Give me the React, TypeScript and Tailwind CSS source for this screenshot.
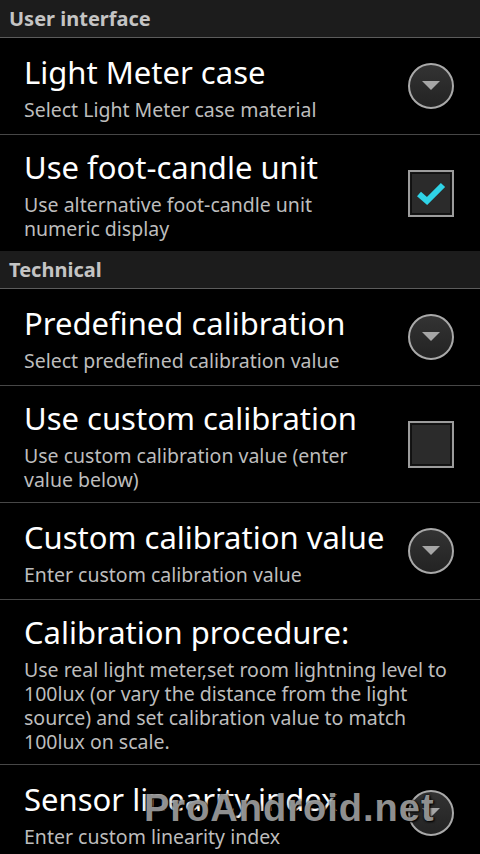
type Pref = {
  title: string;
  summary: string;
  widget?: "list" | "checked" | "unchecked";
};

const userInterface: Pref[] = [
  { title: "Light Meter case", summary: "Select Light Meter case material", widget: "list" },
  {
    title: "Use foot-candle unit",
    summary: "Use alternative foot-candle unit numeric display",
    widget: "checked",
  },
];

const technical: Pref[] = [
  { title: "Predefined calibration", summary: "Select predefined calibration value", widget: "list" },
  {
    title: "Use custom calibration",
    summary: "Use custom calibration value (enter value below)",
    widget: "unchecked",
  },
  { title: "Custom calibration value", summary: "Enter custom calibration value", widget: "list" },
  {
    title: "Calibration procedure:",
    summary:
      "Use real light meter,set room lightning level to 100lux (or vary the distance from the light source) and set calibration value to match 100lux on scale.",
  },
  { title: "Sensor linearity index", summary: "Enter custom linearity index", widget: "list" },
];

const ListIcon = () => (
  <div className="flex h-[46px] w-[46px] items-center justify-center rounded-full border-2 border-[#a9a9a9] bg-gradient-to-b from-[#333] to-[#232323]">
    <svg width="18" height="10" viewBox="0 0 18 10">
      <path d="M0 0 H18 L9 9 Z" fill="#a6a6a6" />
    </svg>
  </div>
);

const CheckBox = ({ checked }: { checked: boolean }) => (
  <div className="flex h-[47px] w-[46px] items-center justify-center border-2 border-[#9c9c9c] bg-[#151515]">
    <div className="flex h-[41px] w-[40px] items-center justify-center border border-[#111] bg-[#2b2b2b]">
      {checked && (
        <svg width="30" height="26" viewBox="0 0 30 26">
          <path
            d="M3 14 L11 21 L27 5"
            fill="none"
            stroke="#2fd3e6"
            strokeWidth="6"
            strokeLinejoin="miter"
          />
        </svg>
      )}
    </div>
  </div>
);

const Header = ({ label }: { label: string }) => (
  <div className="h-[38px] border-b border-[#5c5c5c] bg-[#1c1c1c] pl-[9px] text-[20px] font-bold leading-[37px] text-[#c4c4c4]">
    {label}
  </div>
);

const Row = ({ pref, last }: { pref: Pref; last?: boolean }) => (
  <div className={"flex min-h-[97px] items-center pl-[24px] " + (last ? "" : "border-b border-[#474747]")}>
    <div className={"min-w-0 flex-1 pt-[14px] pb-[10px] " + (pref.widget ? "" : "pr-[24px]")}>
      <div className="whitespace-nowrap text-[31px] leading-[36px] text-white">{pref.title}</div>
      <div className="mt-[8px] text-[19.5px] leading-[24px] text-[#bdbdbd]">{pref.summary}</div>
    </div>
    {pref.widget && (
      <div className="flex w-[98px] shrink-0 justify-center">
        {pref.widget === "list" ? <ListIcon /> : <CheckBox checked={pref.widget === "checked"} />}
      </div>
    )}
  </div>
);

export default function App() {
  return (
    <div className="relative h-[854px] w-[480px] overflow-hidden bg-black font-['Noto_Sans',sans-serif]">
      <Header label="User interface" />
      {userInterface.map((p, i) => (
        <Row key={p.title} pref={p} last={i === userInterface.length - 1} />
      ))}
      <Header label="Technical" />
      {technical.map((p) => (
        <Row key={p.title} pref={p} />
      ))}
      <div className="pointer-events-none absolute left-[144px] top-[780px] font-['Liberation_Sans',sans-serif] text-[38px] font-bold tracking-[1px] text-[#d0d0d0]/70 [text-shadow:0_0_3px_#000,1px_1px_2px_#000]">
        ProAndroid.net
      </div>
    </div>
  );
}
